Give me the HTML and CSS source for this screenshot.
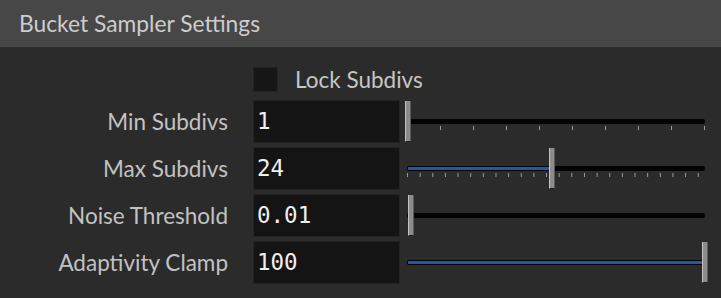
FILE: index.html
```html
<!DOCTYPE html>
<html lang="en">
<head>
    <meta charset="UTF-8">
    <meta name="viewport" content="width=device-width, initial-scale=1.0">
    <title>Bucket Sampler Settings</title>
    <link rel="stylesheet" href="styles.css">
</head>
<body>
    <div class="header">Bucket Sampler Settings</div>
    <div class="panel">
        <div class="lock-row">
            <span></span>
            <label class="lock"><span class="check"></span>Lock Subdivs</label>
        </div>
        <div class="rows">
            <div class="row">
                <span class="label">Min Subdivs</span>
                <div class="field">1</div>
                <div class="slider">
                    <div class="track"></div>
                    <div class="ticks coarse"></div>
                    <div class="handle" style="left: 5px;"></div>
                </div>
            </div>
            <div class="row">
                <span class="label">Max Subdivs</span>
                <div class="field">24</div>
                <div class="slider">
                    <div class="track"><div class="fill" style="width: 143px;"></div></div>
                    <div class="ticks fine"></div>
                    <div class="handle" style="left: 149px;"></div>
                </div>
            </div>
            <div class="row">
                <span class="label">Noise Threshold</span>
                <div class="field">0.01</div>
                <div class="slider">
                    <div class="track"></div>
                    <div class="handle" style="left: 8px;"></div>
                </div>
            </div>
            <div class="row">
                <span class="label">Adaptivity Clamp</span>
                <div class="field">100</div>
                <div class="slider">
                    <div class="track"><div class="fill" style="width: 296px;"></div></div>
                    <div class="handle" style="left: 302px;"></div>
                </div>
            </div>
        </div>
    </div>
</body>
</html>
```

FILE: styles.css
```css
body { margin: 0; background-color: #2b2b2b; font-family: Lato, "Noto Sans", sans-serif; color: #c2c2c2; }
.header { height: 47px; background-color: #474747; color: #cdcdcd; font-size: 22.8px; line-height: 47px; padding-left: 19px; box-sizing: border-box; }
.panel { padding-top: 19px; }
.lock-row { display: grid; grid-template-columns: 253px 1fr; height: 25px; margin-bottom: 9px; }
.lock { display: flex; align-items: center; font-size: 22.5px; color: #c6c6c6; }
.check { width: 25px; height: 25px; box-sizing: border-box; background-color: #161616; border: 1px solid #222; margin-right: 17px; }
.rows { display: grid; row-gap: 4px; }
.row { display: grid; grid-template-columns: 253px 147px 1fr; height: 43px; align-items: center; }
.label { text-align: right; padding-right: 25px; font-size: 22.5px; }
.field { height: 43px; box-sizing: border-box; background-color: #141414; border: 1px solid #232323; padding-left: 3px; font-family: "DejaVu Sans Mono", monospace; font-size: 22.5px; line-height: 41px; color: #f0f0f0; }
.slider { position: relative; height: 43px; }
.track { position: absolute; top: 19px; left: 7px; width: 298px; height: 5px; background-color: #030303; border-radius: 2px; }
.fill { position: absolute; top: 1px; bottom: 1px; left: 1px; background-color: #1d5ba8; }
.ticks { position: absolute; top: 26px; left: 7px; height: 4px; }
.ticks.coarse { width: 298px; background: repeating-linear-gradient(to right, #9c9c9c 0 1px, transparent 1px 33px); }
.ticks.fine { width: 293px; background: linear-gradient(to right, #9c9c9c 0 1px, transparent 1px) repeat-x; background-size: 12.65px 4px; }
.handle { position: absolute; top: 1px; width: 6px; height: 41px; box-sizing: border-box; background-color: #8c8c8c; border-left: 1px solid #c2c2c2; border-right: 1px solid #5a5a5a; border-bottom: 1px solid #1c1c1c; }
```
